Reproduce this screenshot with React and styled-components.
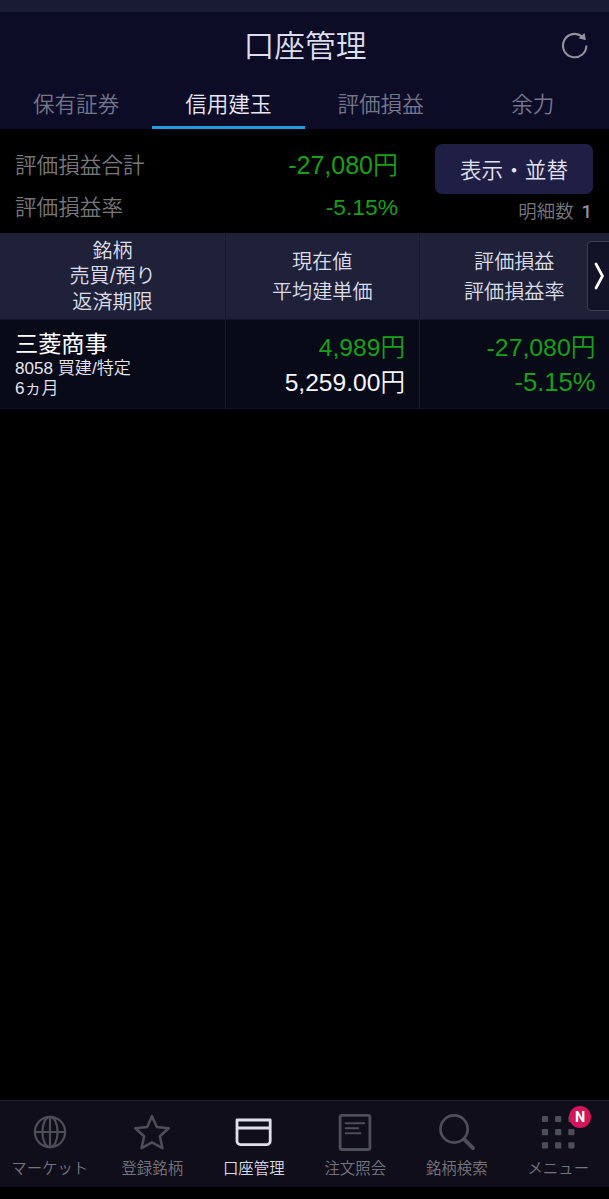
import React from "react";
import styled, { createGlobalStyle } from "styled-components";

const Global = createGlobalStyle`
  * { box-sizing: border-box; }
  html, body { margin: 0; background: #000; }
  body {
    font-family: "Liberation Sans", "Noto Sans CJK JP", sans-serif;
    font-weight: 350;
    overflow: hidden;
  }
`;

const Screen = styled.div`
  width: 609px;
  height: 1199px;
  display: flex;
  flex-direction: column;
  background: #000;
`;

const StatusStrip = styled.div`
  height: 12px;
  flex: none;
  background: #191b35;
`;

const Header = styled.header`
  height: 117px;
  flex: none;
  display: flex;
  flex-direction: column;
  background: #0c0c27;
`;

const TitleBar = styled.div`
  height: 68px;
  display: grid;
  grid-template-columns: 60px 1fr 60px;
  align-items: center;
  padding: 0 5px 2px 6px;
`;

const Title = styled.h1`
  grid-column: 2;
  margin: 0;
  padding-top: 3px;
  text-align: center;
  font-size: 30.8px;
  line-height: 40px;
  font-weight: 350;
  color: #dedeee;
`;

const RefreshButton = styled.button`
  display: flex;
  justify-content: center;
  border: 0;
  padding: 0 0 0 2px;
  background: none;
`;

const Tabs = styled.nav`
  flex: 1;
  display: grid;
  grid-template-columns: repeat(4, 1fr);
`;

const Tab = styled.div`
  text-align: center;
  font-size: 21.6px;
  line-height: 50px;
  height: 49px;
  color: ${(p) => (p.$active ? "#e8e8f6" : "#75758a")};
  border-bottom: 3px solid ${(p) => (p.$active ? "#209cdc" : "transparent")};
`;

const Summary = styled.section`
  height: 104px;
  flex: none;
  display: flex;
  padding: 15px 16px 0 15px;
`;

const Totals = styled.div`
  width: 383px;
  display: flex;
  flex-direction: column;
`;

const TotalRow = styled.div`
  display: flex;
  justify-content: space-between;
  align-items: center;
  height: 42px;
`;

const TotalLabel = styled.span`
  font-size: 21.6px;
  line-height: 30px;
  padding-top: 2px;
  color: #77777c;
`;

const Amount = styled.span`
  font-size: ${(p) => p.$size}px;
  line-height: 35px;
  white-space: nowrap;
  color: ${(p) => (p.$loss ? "#17a017" : "#f6f6fc")};
`;

const Actions = styled.div`
  flex: 1;
  display: flex;
  flex-direction: column;
  align-items: flex-end;
`;

const SortButton = styled.button`
  width: 158px;
  height: 50px;
  border: 0;
  border-radius: 7px;
  padding: 0 0 2px;
  background: #1f1e45;
  color: #e2e2f0;
  font: inherit;
  font-size: 21.6px;
`;

const Count = styled.div`
  display: flex;
  gap: 8px;
  padding: 1px 1px 0 0;
  font-size: 18.4px;
  line-height: 34px;
  color: #77777f;

  b {
    font-family: Roboto, sans-serif;
    font-weight: 500;
    color: #92929c;
  }
`;

const Table = styled.section`
  display: grid;
  grid-template-columns: 226px 193.5px 1fr;
  flex: none;
`;

const HeadCell = styled.div`
  position: relative;
  height: 86px;
  display: flex;
  flex-direction: column;
  justify-content: center;
  align-items: center;
  padding-top: 2px;
  font-size: 20.1px;
  line-height: ${(p) => p.$line}px;
  color: #dedeea;
  background: #1f2139;
  border-right: ${(p) => (p.$last ? 0 : 1)}px solid #16182e;
`;

const Cell = styled.div`
  height: 90px;
  display: flex;
  flex-direction: column;
  align-items: ${(p) => (p.$numeric ? "flex-end" : "flex-start")};
  padding: ${(p) => (p.$numeric ? "10px 13.5px 0 0" : "10px 0 0 15px")};
  background: #090a18;
  border-right: ${(p) => (p.$last ? 0 : 1)}px solid #191b30;
  border-top: 1px solid #141629;
  border-bottom: 1px solid #12132a;
`;

const StockName = styled.div`
  font-size: 23.2px;
  line-height: 29px;
  font-weight: 400;
  color: #fff;
`;

const StockDetail = styled.div`
  font-size: 17.1px;
  line-height: 20px;
  color: #e6e6f0;
`;

const ScrollHandle = styled.button`
  position: absolute;
  top: 8px;
  right: -2px;
  width: 24px;
  height: 70px;
  display: flex;
  align-items: center;
  padding: 0 0 0 6px;
  border: 1px solid #3b3c50;
  border-radius: 4px 0 0 4px;
  background: #121326;
`;

const BottomNav = styled.nav`
  height: 87px;
  flex: none;
  margin-top: auto;
  margin-bottom: 12px;
  display: grid;
  grid-template-columns: repeat(6, 1fr);
  background: #100e1a;
  border-top: 1px solid #20202a;
`;

const NavItem = styled.div`
  position: relative;
  display: flex;
  flex-direction: column;
  align-items: center;
  padding-top: 11px;
  font-size: 15.4px;
  line-height: 22px;
  white-space: nowrap;
  color: ${(p) => (p.$active ? "#dadae8" : "#74747e")};

  &:first-child {
    padding-right: 2px;
  }

  svg {
    display: block;
    margin-bottom: 6px;
    color: ${(p) => (p.$active ? "#dedeec" : "#4e4e59")};
  }
`;

const Badge = styled.span`
  position: absolute;
  top: 5px;
  right: 18px;
  width: 22px;
  height: 22px;
  border-radius: 50%;
  background: #d5145c;
  color: #fff;
  text-align: center;
  font-family: Roboto, sans-serif;
  font-size: 14.5px;
  font-weight: 700;
  line-height: 23px;
`;

const RefreshIcon = () => (
  <svg width="30" height="30" viewBox="0 0 30 30" fill="none">
    <path d="M26.4 15.5A11.7 11.7 0 1 1 22.2 6.6" stroke="#92929e" strokeWidth="2.1" />
    <path d="M24.6 2.9 L25.9 10.2 L18.5 8.2Z" fill="#92929e" />
  </svg>
);

const Icon = ({ children }) => (
  <svg width="40" height="40" viewBox="0 0 40 40" fill="none" stroke="currentColor" strokeWidth="2.2">
    {children}
  </svg>
);

const GlobeIcon = () => (
  <Icon>
    <circle cx="20" cy="20" r="15.1" />
    <ellipse cx="20" cy="20" rx="7.6" ry="15.1" />
    <path d="M20 5v30M5 20h30" />
  </Icon>
);

const StarIcon = () => (
  <Icon>
    <path
      strokeWidth="2.6"
      strokeLinejoin="round"
      d="M20 4.2 L24.9 15 L36.7 16.3 L27.9 24.2 L30.4 36.2 L20 30.3 L9.6 36.2 L12.1 24.2 L3.3 16.3 L15.1 15Z"
    />
  </Icon>
);

const CardIcon = () => (
  <Icon>
    <path strokeWidth="2.8" strokeLinejoin="round" d="M3 8h33.2v21.2a3.4 3.4 0 0 1-3.4 3.4H6.4a3.4 3.4 0 0 1-3.4-3.4Z" />
    <path strokeWidth="3.2" d="M3 16h33.2" />
  </Icon>
);

const OrderIcon = () => (
  <Icon>
    <rect x="5.1" y="3.3" width="29.8" height="34.2" rx="1.8" strokeWidth="2.8" />
    <path strokeLinecap="round" strokeWidth="2" d="M10.7 11.2h18.5M10.7 16.2h12.5M10.7 21.3h14.7" />
  </Icon>
);

const SearchIcon = () => (
  <Icon>
    <circle cx="17.1" cy="17" r="13.6" strokeWidth="2.7" />
    <path strokeWidth="4" strokeLinecap="round" d="M27 27.1 L36 36.1" />
  </Icon>
);

const MenuIcon = () => (
  <Icon>
    {[7, 20.2, 33.4].map((y) =>
      [7, 20.2, 33.4].map((x) => (
        <rect key={`${x}-${y}`} x={x - 3.1} y={y - 3.1} width="6.2" height="6.2" rx="1" fill="currentColor" stroke="none" />
      ))
    )}
  </Icon>
);

const tabs = ["保有証券", "信用建玉", "評価損益", "余力"];
const navItems = [
  ["マーケット", GlobeIcon],
  ["登録銘柄", StarIcon],
  ["口座管理", CardIcon],
  ["注文照会", OrderIcon],
  ["銘柄検索", SearchIcon],
  ["メニュー", MenuIcon],
];

export default function App() {
  return (
    <Screen lang="ja">
      <Global />
      <StatusStrip />
      <Header>
        <TitleBar>
          <Title>口座管理</Title>
          <RefreshButton aria-label="更新">
            <RefreshIcon />
          </RefreshButton>
        </TitleBar>
        <Tabs>
          {tabs.map((t) => (
            <Tab key={t} $active={t === "信用建玉"}>{t}</Tab>
          ))}
        </Tabs>
      </Header>

      <Summary>
        <Totals>
          <TotalRow>
            <TotalLabel>評価損益合計</TotalLabel>
            <Amount $loss $size={25}>-27,080円</Amount>
          </TotalRow>
          <TotalRow>
            <TotalLabel>評価損益率</TotalLabel>
            <Amount $loss $size={22.8}>-5.15%</Amount>
          </TotalRow>
        </Totals>
        <Actions>
          <SortButton>表示・並替</SortButton>
          <Count>明細数 <b>1</b></Count>
        </Actions>
      </Summary>

      <Table>
        <HeadCell $line={25.5}>
          <span>銘柄</span>
          <span>売買/預り</span>
          <span>返済期限</span>
        </HeadCell>
        <HeadCell $line={30}>
          <span>現在値</span>
          <span>平均建単価</span>
        </HeadCell>
        <HeadCell $line={30} $last>
          <span>評価損益</span>
          <span>評価損益率</span>
          <ScrollHandle aria-label="次の列">
            <svg width="12" height="28" viewBox="0 0 12 28" fill="none">
              <path d="M2 2 L8.5 14 L2 26" stroke="#fff" strokeWidth="2.7" strokeLinecap="round" />
            </svg>
          </ScrollHandle>
        </HeadCell>
        <Cell>
          <StockName>三菱商事</StockName>
          <StockDetail>8058 買建/特定</StockDetail>
          <StockDetail>6ヵ月</StockDetail>
        </Cell>
        <Cell $numeric>
          <Amount $loss $size={24.6}>4,989円</Amount>
          <Amount $size={24.6}>5,259.00円</Amount>
        </Cell>
        <Cell $numeric $last>
          <Amount $loss $size={24.8}>-27,080円</Amount>
          <Amount $loss $size={25.6}>-5.15%</Amount>
        </Cell>
      </Table>

      <BottomNav>
        {navItems.map(([label, Glyph]) => (
          <NavItem key={label} $active={label === "口座管理"}>
            <Glyph />
            {label}
            {label === "メニュー" && <Badge>N</Badge>}
          </NavItem>
        ))}
      </BottomNav>
    </Screen>
  );
}
